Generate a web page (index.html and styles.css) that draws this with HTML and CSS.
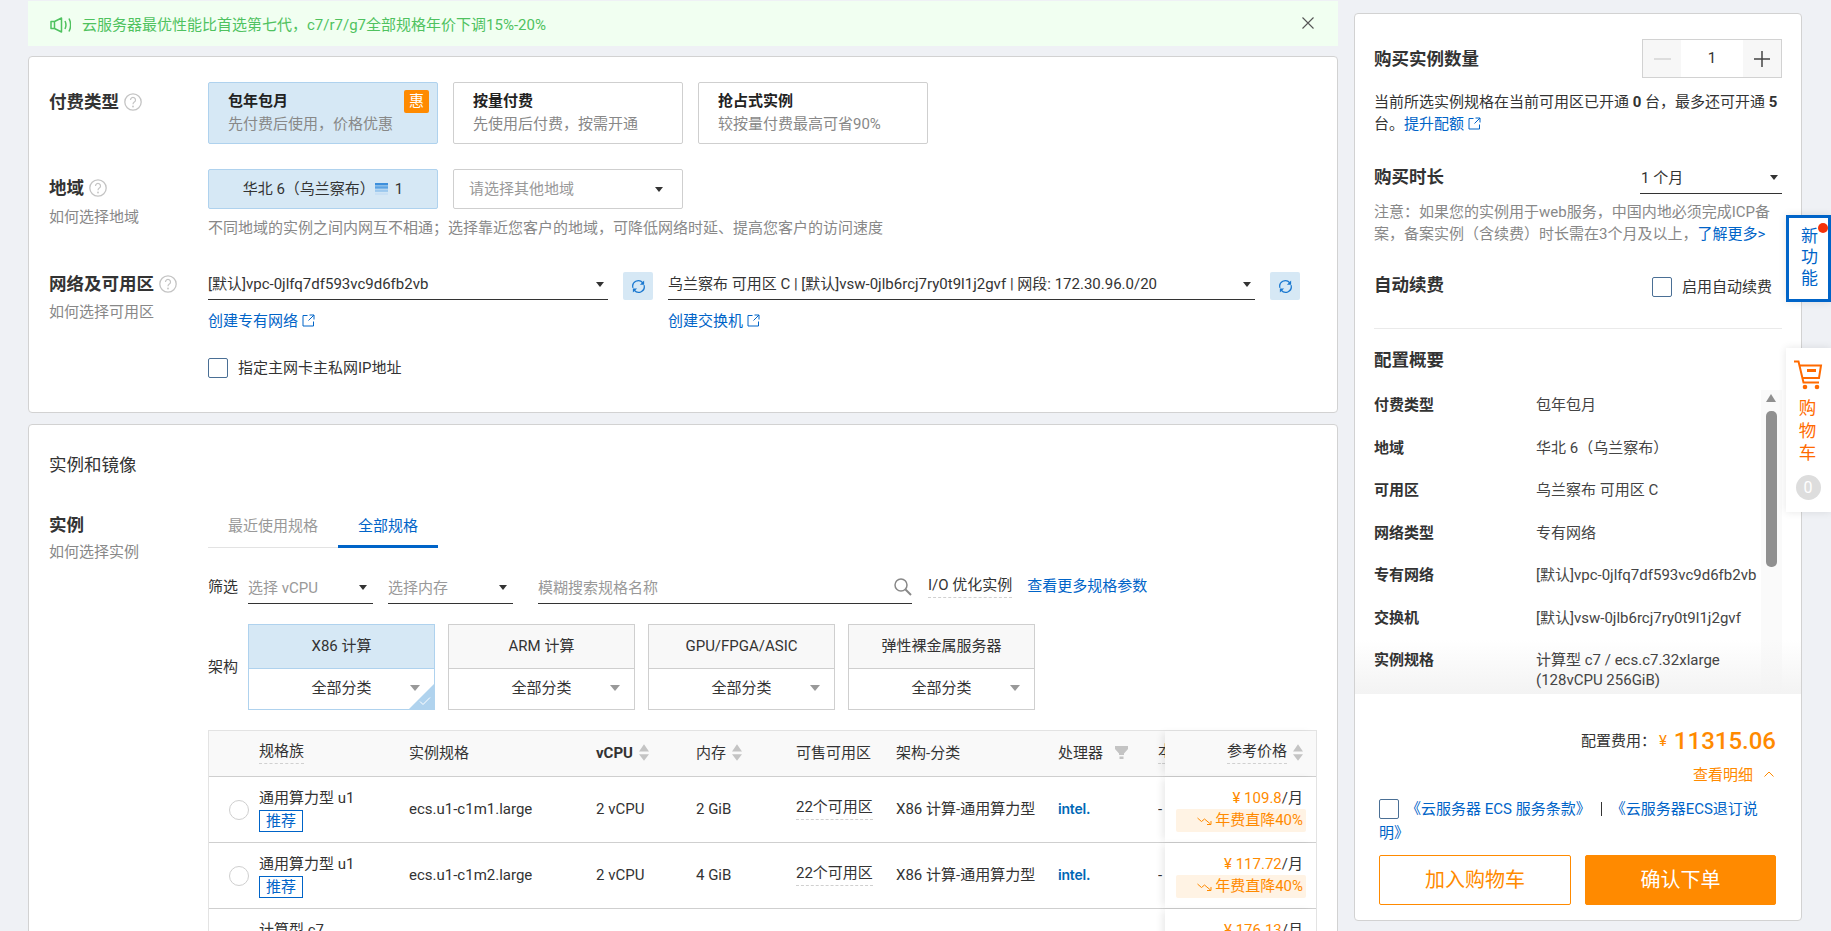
FILE: index.html
```html
<!DOCTYPE html>
<html lang="zh-CN">
<head>
<meta charset="utf-8">
<title>云服务器 ECS</title>
<link rel="stylesheet" href="styles.css">
</head>
<body>
<svg class="defs" width="0" height="0" aria-hidden="true">
  <symbol id="ext" viewBox="0 0 13 13"><path d="M5.500 1.500H1v10.500h10.500V7.500M7.500 1h4.500v4.500M12 1L6.500 6.500" fill="none" stroke="currentColor" stroke-width="1"/></symbol>
  <symbol id="refresh" viewBox="0 0 16 16"><path d="M2.100 9.500A6 6 0 0 1 12.500 4M13.900 6.500A6 6 0 0 1 3.500 12" fill="none" stroke="currentColor" stroke-width="1.300"/><path d="M14 1.500V6H9.500zM2 14.500V10h4.500z" fill="currentColor"/></symbol>
  <symbol id="trend" viewBox="0 0 17 10"><path d="M0.500 2l4 3.500 3-2.500 6 5M10 8.500h4V5" fill="none" stroke="currentColor" stroke-width="1"/></symbol>
  <symbol id="help" viewBox="0 0 18 18"><circle cx="9" cy="9" r="8.200" fill="none" stroke="#c4c4c4" stroke-width="1.300"/><path d="M6.500 7a2.500 2.500 0 1 1 3.800 2.100c-.9.600-1.300 1-1.300 2.100" fill="none" stroke="#c4c4c4" stroke-width="1.200"/><circle cx="9" cy="13.500" r=".9" fill="#c4c4c4"/></symbol>
  <symbol id="sort" viewBox="0 0 11 18"><path d="M5.500 0L11 8H0zM0 11h11l-5.500 7z" fill="#c4c4c4"/></symbol>
</svg>

<div class="page">
  <main class="main">
    <div class="notice">
      <svg class="notice-icon" viewBox="0 0 21 16"><path d="M1 4.500h3.500L11.500 1v14l-7-3.500H1zM4.500 4.500v7M15 4c1.200 2.500 1.200 5.500 0 8M19 1.500c2 4 2 9 0 13" fill="none" stroke="#4fc25f" stroke-width="1.500" stroke-linejoin="round"/></svg>
      <span class="notice-text">云服务器最优性能比首选第七代，c7/r7/g7全部规格年价下调15%-20%</span>
      <svg class="notice-close" viewBox="0 0 12 12"><path d="M0.500 0.500l11 11M11.500 0.500l-11 11" stroke="#555" stroke-width="1.100"/></svg>
    </div>

    <section class="card card-first">
      <div class="form-row">
        <div class="label pad-8"><h3>付费类型<svg class="help"><use href="#help"/></svg></h3></div>
        <div class="options">
          <div class="option selected">
            <b>包年包月</b><span>先付费后使用，价格优惠</span>
            <i class="hui">惠</i>
          </div>
          <div class="option"><b>按量付费</b><span>先使用后付费，按需开通</span></div>
          <div class="option"><b>抢占式实例</b><span>较按量付费最高可省90%</span></div>
        </div>
      </div>

      <div class="form-row row-region">
        <div class="label pad-7"><h3>地域<svg class="help"><use href="#help"/></svg></h3><p class="desc d-7">如何选择地域</p></div>
        <div>
          <div class="options">
            <div class="region-tag">华北 6（乌兰察布）
              <svg class="region-icon" viewBox="0 0 13 12"><rect width="13" height="2.500" fill="#3d8fdc"/><rect y="3.200" width="13" height="2.500" fill="#5ba3e4"/><rect y="6.400" width="13" height="2.500" fill="#9cc8ee"/><rect y="9.600" width="13" height="2.400" fill="#c9e0f4"/></svg>
              <span>1</span>
            </div>
            <div class="region-select"><span>请选择其他地域</span><i class="caret"></i></div>
          </div>
          <p class="desc help-line">不同地域的实例之间内网互不相通；选择靠近您客户的地域，可降低网络时延、提高您客户的访问速度</p>
        </div>
      </div>

      <div class="form-row row-net">
        <div class="label"><h3>网络及可用区<svg class="help"><use href="#help"/></svg></h3><p class="desc d-6">如何选择可用区</p></div>
        <div>
          <div class="net-grid">
            <div class="net-col">
              <div class="net-line">
                <div class="uselect vpc"><span>[默认]vpc-0jlfq7df593vc9d6fb2vb</span><i class="caret"></i></div>
                <button class="refresh"><svg><use href="#refresh"/></svg></button>
              </div>
              <a class="link net-link">创建专有网络<svg class="ext"><use href="#ext"/></svg></a>
            </div>
            <div class="net-col">
              <div class="net-line">
                <div class="uselect vsw"><span>乌兰察布 可用区 C | [默认]vsw-0jlb6rcj7ry0t9l1j2gvf | 网段: 172.30.96.0/20</span><i class="caret"></i></div>
                <button class="refresh"><svg><use href="#refresh"/></svg></button>
              </div>
              <a class="link net-link">创建交换机<svg class="ext"><use href="#ext"/></svg></a>
            </div>
          </div>
          <label class="check-line"><i class="checkbox"></i>指定主网卡主私网IP地址</label>
        </div>
      </div>
    </section>

    <section class="card card-second">
      <h2 class="card-title">实例和镜像</h2>
      <div class="form-row row-inst">
        <div class="label"><h3>实例</h3><p class="desc d-5">如何选择实例</p></div>
        <div class="inst-body">
          <div class="tabs">
            <span class="tab">最近使用规格</span>
            <span class="tab active">全部规格</span>
          </div>
          <div class="filter">
            <span class="side-label">筛选</span>
            <div class="uselect small placeholder"><span>选择 vCPU</span><i class="caret"></i></div>
            <div class="uselect small placeholder"><span>选择内存</span><i class="caret"></i></div>
            <div class="uselect search placeholder"><span>模糊搜索规格名称</span>
              <svg class="search-icon" viewBox="0 0 18 18"><circle cx="7" cy="7" r="6" fill="none" stroke="#888" stroke-width="1.500"/><path d="M11.500 11.500L17 17" stroke="#888" stroke-width="2"/></svg>
            </div>
            <span class="io dashed">I/O 优化实例</span>
            <a class="link more">查看更多规格参数</a>
          </div>
          <div class="arch">
            <span class="side-label">架构</span>
            <div class="arch-card on">
              <div class="arch-top">X86 计算</div>
              <div class="arch-bottom"><span>全部分类</span><i class="caret grey"></i></div>
              <i class="corner"><svg viewBox="0 0 12 10"><path d="M1 5.500l3 3 7-7" fill="none" stroke="#fff" stroke-width="1"/></svg></i>
            </div>
            <div class="arch-card">
              <div class="arch-top">ARM 计算</div>
              <div class="arch-bottom"><span>全部分类</span><i class="caret grey"></i></div>
            </div>
            <div class="arch-card">
              <div class="arch-top">GPU/FPGA/ASIC</div>
              <div class="arch-bottom"><span>全部分类</span><i class="caret grey"></i></div>
            </div>
            <div class="arch-card">
              <div class="arch-top">弹性裸金属服务器</div>
              <div class="arch-bottom"><span>全部分类</span><i class="caret grey"></i></div>
            </div>
          </div>
          <div class="table">
            <div class="tr th">
              <div></div>
              <div><span class="dashed">规格族</span></div>
              <div>实例规格</div>
              <div class="sortable"><b>vCPU</b><svg class="sort"><use href="#sort"/></svg></div>
              <div class="sortable">内存<svg class="sort"><use href="#sort"/></svg></div>
              <div>可售可用区</div>
              <div>架构-分类</div>
              <div class="sortable">处理器<svg class="funnel" viewBox="0 0 13 13"><path d="M0 0h13v3L9 7.500v1.500H4V7.500L0 3zM4.500 10.500h4V13h-4z" fill="#c4c4c4"/></svg></div>
              <div class="clip"><span class="dashed">本</span></div>
              <div class="price th-price"><span class="dashed">参考价格</span><svg class="sort"><use href="#sort"/></svg></div>
            </div>
            <div class="tr">
              <div><i class="radio"></i></div>
              <div class="fam">通用算力型 u1<em class="rec">推荐</em></div>
              <div>ecs.u1-c1m1.large</div>
              <div>2 vCPU</div>
              <div>2 GiB</div>
              <div><span class="dashed">22个可用区</span></div>
              <div>X86 计算-通用算力型</div>
              <div><span class="intel">intel.</span></div>
              <div class="clip">-</div>
              <div class="price"><p><span class="org">¥ 109.8</span>/月</p><p class="cut"><svg class="trend"><use href="#trend"/></svg>年费直降40%</p></div>
            </div>
            <div class="tr">
              <div><i class="radio"></i></div>
              <div class="fam">通用算力型 u1<em class="rec">推荐</em></div>
              <div>ecs.u1-c1m2.large</div>
              <div>2 vCPU</div>
              <div>4 GiB</div>
              <div><span class="dashed">22个可用区</span></div>
              <div>X86 计算-通用算力型</div>
              <div><span class="intel">intel.</span></div>
              <div class="clip">-</div>
              <div class="price"><p><span class="org">¥ 117.72</span>/月</p><p class="cut"><svg class="trend"><use href="#trend"/></svg>年费直降40%</p></div>
            </div>
            <div class="tr">
              <div></div>
              <div class="fam">计算型 c7</div>
              <div></div><div></div><div></div><div></div><div></div><div></div><div></div>
              <div class="price"><p><span class="org">¥ 176.13</span>/月</p></div>
            </div>
          </div>
        </div>
      </div>
    </section>
  </main>

  <aside class="side">
    <div class="side-top">
      <div class="side-row qty-row">
        <h3>购买实例数量</h3>
        <div class="stepper"><span class="step minus"><i></i></span><span class="num">1</span><span class="step plus"><svg viewBox="0 0 16 16"><path d="M8 0v16M0 8h16" stroke="#444" stroke-width="1.500"/></svg></span></div>
      </div>
      <p class="side-text t-13">当前所选实例规格在当前可用区已开通 <b>0</b> 台，最多还可开通 <b>5</b> 台。<a class="link">提升配额<svg class="ext"><use href="#ext"/></svg></a></p>
      <div class="side-row dur-row">
        <h3>购买时长</h3>
        <div class="uselect dur"><span>1 个月</span><i class="caret"></i></div>
      </div>
      <p class="side-text grey t-7">注意：如果您的实例用于web服务，中国内地必须完成ICP备案，备案实例（含续费）时长需在3个月及以上，<a class="link">了解更多&gt;</a></p>
      <div class="side-row renew-row">
        <h3>自动续费</h3>
        <label class="check-line renew"><i class="checkbox"></i>启用自动续费</label>
      </div>
      <hr class="divider">
      <h3 class="sum-title">配置概要</h3>
    </div>
    <div class="summary">
      <div class="scrollbar"><i class="sb-up"></i><i class="sb-thumb"></i></div>
      <div class="fade"></div>
      <dl class="sum-list">
        <div><dt>付费类型</dt><dd>包年包月</dd></div>
        <div><dt>地域</dt><dd>华北 6（乌兰察布）</dd></div>
        <div><dt>可用区</dt><dd>乌兰察布 可用区 C</dd></div>
        <div><dt>网络类型</dt><dd>专有网络</dd></div>
        <div><dt>专有网络</dt><dd>[默认]vpc-0jlfq7df593vc9d6fb2vb</dd></div>
        <div><dt>交换机</dt><dd>[默认]vsw-0jlb6rcj7ry0t9l1j2gvf</dd></div>
        <div><dt>实例规格</dt><dd>计算型 c7 / ecs.c7.32xlarge<br>(128vCPU 256GiB)</dd></div>
      </dl>
    </div>
    <div class="side-foot">
      <div class="fee">配置费用：<span class="yen">¥</span><strong>11315.06</strong></div>
      <div class="detail">查看明细<svg viewBox="0 0 10 6"><path d="M0.500 5.500L5 1l4.500 4.500" fill="none" stroke="#ff8a00" stroke-width="1"/></svg></div>
      <p class="terms"><i class="checkbox"></i><a class="link">《云服务器 ECS 服务条款》</a><i class="sep"></i><a class="link">《云服务器ECS退订说<br>明》</a></p>
      <div class="btns">
        <button class="btn ghost">加入购物车</button>
        <button class="btn solid">确认下单</button>
      </div>
    </div>
  </aside>
</div>

<div class="float-new">新<br>功<br>能<i class="dot"></i></div>
<div class="float-cart">
  <svg class="cart-icon" viewBox="0 0 30 30"><path d="M0 1.500h4.500L9.500 22.500H25M6 5.500h21L25 18H8.500M13 10.500h9" fill="none" stroke="#ff6a00" stroke-width="2"/><path d="M13 10.500h9" stroke="#ff6a00" stroke-width="3"/><circle cx="11" cy="27" r="2.300" fill="#ff6a00"/><circle cx="23" cy="27" r="2.300" fill="#ff6a00"/></svg>
  <span class="cart-text">购<br>物<br>车</span>
  <span class="cart-count">0</span>
</div>
</body>
</html>
```

FILE: styles.css
```css
* { box-sizing: border-box; }
html, body { margin: 0; height: 931px; overflow: hidden; }
body {
  background: #eff1f5;
  color: #333;
  font: 15px/20px Roboto, "Noto Sans CJK SC", sans-serif;
}
h2, h3, p, dl, dd { margin: 0; }
i, em { font-style: normal; }
.defs { position: absolute; }
.page { display: flex; align-items: flex-start; padding-left: 28px; height: 931px; overflow: hidden; }
.main { width: 1310px; flex: none; padding-top: 1px; }

/* notice */
.notice {
  height: 45px; background: #f1fff1; display: flex; align-items: center;
  padding: 3px 24px 0 22px; margin-bottom: 10px; color: #4fc25f;
}
.notice-icon { width: 21px; height: 16px; margin-right: 11px; }
.notice-text { flex: 1; }
.notice-close { width: 12px; height: 12px; margin-top: -4px; }

/* cards */
.card { background: #fff; border: 1px solid #d2d2d2; border-radius: 4px; padding-left: 20px; }
.card-first { height: 357px; padding-top: 25px; margin-bottom: 11px; }
.card-second { padding-top: 27px; padding-bottom: 200px; }
.card-title { font-size: 17.500px; font-weight: 400; line-height: 26px; }
.form-row { display: grid; grid-template-columns: 159px 1fr; }
.row-region { margin-top: 25px; }
.row-net { margin-top: 34px; }
.row-inst { margin-top: 35px; }
.label h3 { display: flex; align-items: center; }
h3 { font-size: 17.500px; line-height: 24px; font-weight: 700; color: #333; }
.pad-8 { padding-top: 8px; }
.pad-7 { padding-top: 7px; }
.help { width: 18px; height: 18px; margin-left: 5px; }
.desc { color: #888; }
.d-7 { margin-top: 7px; }
.d-6 { margin-top: 6px; }
.d-5 { margin-top: 5px; }
.help-line { margin-top: 9px; }

/* pay options */
.options { display: flex; gap: 15px; }
.option {
  position: relative; width: 230px; height: 62px; border: 1px solid #cfcfcf; border-radius: 2px;
  padding: 8px 19px; display: flex; flex-direction: column; gap: 3px;
}
.option b { color: #222; }
.option span { color: #888; }
.option.selected { background: #d6e8f5; border-color: #afd2ee; }
.hui {
  position: absolute; top: 7px; right: 8px; width: 25px; height: 23px; background: #ff8a00;
  color: #fff; border-radius: 2px; text-align: center; line-height: 23px;
}

/* region */
.region-tag {
  width: 230px; height: 40px; background: #d6e8f5; border: 1px solid #afd2ee; border-radius: 2px;
  display: flex; align-items: center; justify-content: center;
}
.region-icon { width: 13px; height: 12px; margin: 0 7px 0 0; }
.region-select {
  width: 230px; height: 40px; border: 1px solid #cfcfcf; border-radius: 2px; color: #999;
  display: flex; align-items: center; justify-content: space-between; padding: 0 19px 0 15px;
}
.caret { width: 0; height: 0; border: 4px solid transparent; border-top: 5px solid #333; border-bottom: 0; flex: none; }
.caret.grey { border-top-color: #999; border-left-width: 5px; border-right-width: 5px; border-top-width: 6px; }

/* network */
.net-grid { display: flex; gap: 15px; }
.net-line { display: flex; gap: 15px; }
.uselect {
  height: 28px; border-bottom: 1px solid #333; display: flex; align-items: center;
  justify-content: space-between; padding: 0 3px 3px 0;
}
.uselect span { white-space: nowrap; }
.vpc { width: 400px; padding-right: 4px; }
.vsw { width: 587px; padding-right: 4px; }
.refresh { width: 30px; height: 28px; background: #d6e8f5; border: 0; border-radius: 2px; padding: 0; color: #1a78d0; display: flex; align-items: center; justify-content: center; }
.refresh svg { width: 15px; height: 15px; }
.link { color: #0064c8; }
.net-link { display: block; margin-top: 11px; }
.ext { width: 13px; height: 13px; margin-left: 4px; vertical-align: -1px; }
.check-line { display: flex; align-items: center; }
.row-net .check-line { margin-top: 27px; }
.checkbox { display: inline-block; width: 20px; height: 20px; border: 1px solid #4a6f95; border-radius: 2px; margin-right: 10px; flex: none; }

/* instance */
.inst-body { min-width: 0; }
.tabs { display: flex; height: 35px; }
.tab { width: 130px; height: 35px; padding-top: 3px; text-align: center; color: #999; border-bottom: 1px solid #e3e3e3; }
.tab.active { width: 100px; color: #0064c8; border-bottom: 3px solid #0064c8; }
.filter { display: flex; margin-top: 27px; align-items: flex-start; }
.side-label { width: 40px; flex: none; padding-top: 2px; }
.filter .uselect { height: 29px; padding-right: 6px; }
.placeholder { color: #999; }
.small { width: 125px; margin-right: 15px; }
.search { width: 374px; margin-left: 10px; padding-right: 0 !important; }
.search-icon { width: 18px; height: 18px; margin-top: -2px; }
.io { margin-left: 16px; height: 23px; }
.dashed { display: inline-block; border-bottom: 1px dashed #d0d0d0; padding-bottom: 2px; line-height: 20px; }
.more { margin: 1px 0 0 15px; }
.arch { display: flex; align-items: center; margin-top: 20px; }
.arch .side-label { padding-top: 0; }
.arch-card { position: relative; width: 187px; height: 86px; border: 1px solid #cfcfcf; margin-right: 13px; flex: none; }
.arch-top { height: 44px; padding-bottom: 2px; background: #f8f8f8; border-bottom: 1px solid #cfcfcf; display: flex; align-items: center; justify-content: center; }
.arch-bottom { display: grid; grid-template-columns: 1fr auto 1fr; align-items: center; height: 40px; padding: 0 14px 2px; }
.arch-bottom span { grid-column: 2; }
.arch-bottom .caret { grid-column: 3; justify-self: end; }
.arch-card.on { border-color: #afd2ee; }
.on .arch-top { background: #d6e8f5; border-bottom-color: #afd2ee; }
.corner {
  position: absolute; right: -1px; bottom: -1px; width: 27px; height: 27px; background: #b0d3ee;
  clip-path: polygon(100% 0, 100% 100%, 0 100%);
}
.corner svg { position: absolute; right: 4px; bottom: 4px; width: 12px; height: 10px; }

/* table */
.table { margin-top: 20px; width: 1109px; border: solid #e3e3e3; border-width: 1px 1px 0; }
.tr {
  display: grid; grid-template-columns: 50px 150px 187px 100px 100px 100px 162px 100px 7px 151px;
  height: 66px; align-items: center; border-bottom: 1px solid #cfcfcf;
}
.tr.th { height: 46px; background: #f9f9f9; }
.tr > div { white-space: nowrap; padding-bottom: 2px; }
.radio { display: block; width: 20px; height: 20px; border: 1px solid #cfcfcf; border-radius: 50%; margin: 2px 0 0 20px; }
.tr > .fam { align-self: start; padding: 11px 0 0; }
.rec {
  display: block; width: 44px; height: 22px; margin-top: 2px; border: 1px solid #0064c8; color: #0064c8;
  text-align: center; line-height: 20px;
}
.sortable { display: flex; align-items: center; }
.sort { width: 10px; height: 17px; margin-left: 6px; flex: none; }
.funnel { width: 13px; height: 13px; margin-left: 12px; }
.clip { overflow: hidden; }
.intel { color: #0068b5; font-family: Inter, sans-serif; font-weight: 600; font-size: 14px; letter-spacing: -0.2px; }
.tr > .price {
  position: relative; height: 100%; background: #fff; box-shadow: -5px 0 7px -2px rgba(0,0,0,.08);
  padding: 11px 13px 0 11px; text-align: right;
}
.price p { line-height: 20px; }
.tr > .th-price { background: #f9f9f9; display: flex; align-items: center; justify-content: flex-end; padding: 0 13px 2px 0; }
.org { color: #ff8a00; }
.cut {
  height: 23px; background: #fff3e4; color: #ff8a00; border-radius: 2px; margin: 1px -3px 0 0;
  padding-right: 3px; line-height: 23px !important; display: flex; align-items: center; justify-content: flex-end;
}
.trend { width: 17px; height: 10px; margin-right: 1px; }

/* side panel */
.side {
  width: 448px; height: 908px; margin: 13px 0 0 16px; background: #fff; border: 1px solid #d2d2d2;
  border-radius: 4px; flex: none; display: flex; flex-direction: column; overflow: hidden;
}
.side-top { padding: 25px 19px 0; }
.side-row { display: flex; justify-content: space-between; align-items: center; }
.stepper { width: 140px; height: 39px; border: 1px solid #d2d2d2; display: flex; }
.step { width: 38px; background: #f7f7f7; display: flex; align-items: center; justify-content: center; flex: none; }
.minus i { display: block; width: 17px; height: 2px; background: #ddd; }
.plus svg { width: 16px; height: 16px; }
.num { flex: 1; text-align: center; line-height: 37px; }
.side-text { line-height: 22px; }
.t-13 { margin-top: 13px; }
.t-7 { margin-top: 7px; }
.grey { color: #888; }
.dur-row { margin-top: 30px; align-items: flex-start; }
.uselect.dur { width: 142px; height: 29px; padding: 0 4px 3px 1px; }
.renew-row { margin-top: 28px; height: 24px; align-items: flex-start; }
.renew { margin: 4px 10px 0 0; }
.divider { border: 0; border-top: 1px solid #eaeaea; margin: 31px 0 0; }
.sum-title { margin-top: 19px; }

.summary { position: relative; margin-top: 18px; padding: 0 19px; height: 304px; overflow: hidden; }
.sum-list { position: relative; padding-top: 5px; }
.sum-list > div { display: grid; grid-template-columns: 162px 1fr; margin-bottom: 22.500px; }
.sum-list dt { font-weight: 700; color: #333; }
.sum-list dd { line-height: 20px; color: #444; }
.scrollbar { position: absolute; top: 0; right: 19px; bottom: 0; width: 21px; background: #fafafa; padding-left: 5px; }
.sb-up { display: block; width: 0; height: 0; margin-top: 4px; border: 5.500px solid transparent; border-bottom: 8px solid #909090; border-top: 0; }
.sb-thumb { display: block; width: 11px; height: 156px; margin-top: 9px; background: #909090; border-radius: 5px; }
.fade { position: absolute; left: 0; right: 0; bottom: 0; height: 54px; background: linear-gradient(rgba(243,243,243,0), #f3f3f3); }

.side-foot { padding: 0 25px 0 24px; }
.fee { margin-top: 32px; height: 30px; display: flex; align-items: center; justify-content: flex-end; }
.yen { color: #ff8a00; margin: 0 7px 0 3px; }
.fee strong { color: #ff8a00; font-size: 24px; font-weight: 500; line-height: 30px; }
.detail { margin-top: 9px; color: #ff8a00; text-align: right; padding-right: 2px; }
.detail svg { width: 10px; height: 6px; margin-left: 11px; vertical-align: 3px; }
.terms { margin-top: 12px; line-height: 24px; }
.terms .checkbox { margin-right: 7px; vertical-align: -5px; }
.sep { display: inline-block; width: 1px; height: 14px; background: #333; margin: 0 9px 0 10px; vertical-align: -2px; }
.btns { display: flex; justify-content: space-between; margin-top: 10px; }
.btn { width: 192px; height: 50px; border-radius: 2px; font: 20px/48px Roboto, "Noto Sans CJK SC", sans-serif; padding: 0; }
.ghost { background: #fff; border: 1px solid #ff8a00; color: #ff8a00; }
.solid { width: 191px; background: #ff8a00; border: 1px solid #ff8a00; color: #fff; }

/* floating */
.float-new {
  position: absolute; left: 1786px; top: 215px; width: 45px; height: 87px; background: #fff;
  border: 3px solid #0064c8; color: #0064c8; font-size: 17px; line-height: 21px;
  padding: 8px 0 0 12px; box-shadow: 0 0 8px rgba(0,0,0,.1);
}
.dot { position: absolute; left: 29px; top: 5px; width: 10px; height: 10px; border-radius: 50%; background: #f5320a; }
.float-cart {
  position: absolute; left: 1786px; top: 348px; width: 45px; height: 164px; background: #fff;
  box-shadow: 0 0 8px rgba(0,0,0,.1); display: flex; flex-direction: column; align-items: center;
  padding: 12px 0 0 0;
}
.cart-icon { width: 30px; height: 30px; margin-left: 1px; }
.cart-text { color: #ff6a00; font-size: 17.500px; line-height: 22.500px; margin-top: 7px; margin-right: 2px; }
.cart-count {
  width: 25px; height: 25px; border-radius: 50%; background: #ddd; color: #fff; text-align: center;
  line-height: 25px; font-size: 16px; margin-top: 10px; margin-right: 1px;
}
```
